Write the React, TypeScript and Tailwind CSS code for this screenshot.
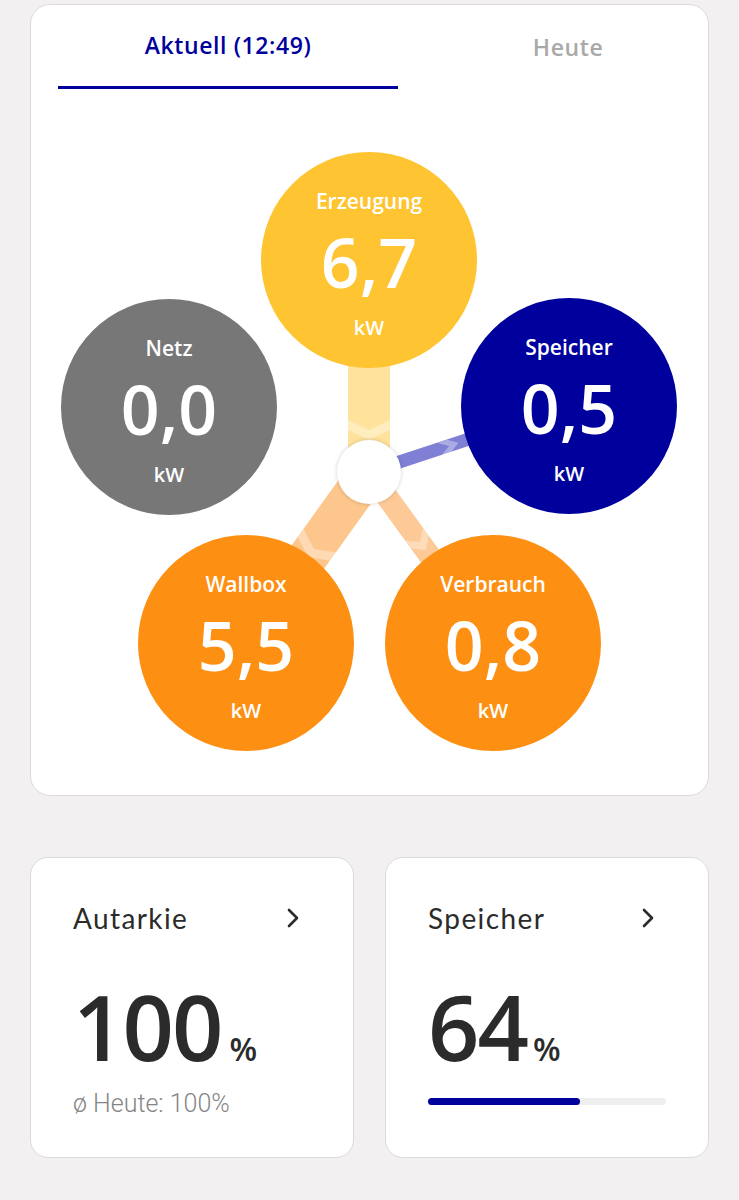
import React from 'react';

// flow-diagram node, positions are in the diagram box's own coordinates
type Node = {
  label: string;
  value: string;
  pos: string;
  color: string;
};

const nodes: Node[] = [
  { label: 'Erzeugung', value: '6,7', pos: 'left-[230px] top-[63px]', color: 'bg-[#fec431]' },
  { label: 'Netz', value: '0,0', pos: 'left-[30px] top-[210px]', color: 'bg-[#777777]' },
  { label: 'Speicher', value: '0,5', pos: 'left-[430px] top-[209px]', color: 'bg-[#00009c]' },
  { label: 'Wallbox', value: '5,5', pos: 'left-[107px] top-[446px]', color: 'bg-[#fd8f13]' },
  { label: 'Verbrauch', value: '0,8', pos: 'left-[354px] top-[446px]', color: 'bg-[#fd8f13]' },
];

const CX = 338;
const CY = 383;

function Chevron({ x, y, angle, h }: { x: number; y: number; angle: number; h: number }) {
  return (
    <polygon
      points={`-10,${-h} 0,${-h} 10,0 0,${h} -10,${h} 0,0`}
      transform={`translate(${x} ${y}) rotate(${angle})`}
      fill="#ffffff"
      fillOpacity={0.35}
    />
  );
}

function FlowLines() {
  return (
    <svg className="absolute left-0 top-0" width={677} height={703} viewBox="0 0 677 703">
      {/* Erzeugung -> center */}
      <line x1={CX} y1={260} x2={CX} y2={CY} stroke="#ffe39c" strokeWidth={42} />
      <Chevron x={CX} y={341} angle={90} h={21} />
      {/* center -> Speicher */}
      <line x1={CX} y1={CY} x2={538} y2={317} stroke="#7f7fd5" strokeWidth={13} />
      <Chevron x={418} y={357} angle={-18.3} h={6.5} />
      {/* center -> Wallbox */}
      <line x1={CX} y1={CY} x2={215} y2={554} stroke="#fdc68c" strokeWidth={40} />
      <Chevron x={283} y={460} angle={125.7} h={20} />
      {/* center -> Verbrauch */}
      <line x1={CX} y1={CY} x2={462} y2={554} stroke="#fdca97" strokeWidth={22} />
      <Chevron x={389} y={453} angle={54} h={11} />
    </svg>
  );
}

function Bubble({ node }: { node: Node }) {
  return (
    <div
      className={`absolute ${node.pos} ${node.color} w-[216px] h-[216px] rounded-full flex flex-col items-center text-white font-['Open_Sans',sans-serif]`}
    >
      <span className="mt-[38px] text-[21px] leading-[22px] font-semibold">{node.label}</span>
      <span className="mt-[16px] text-[68px] leading-[68px] font-semibold">{node.value}</span>
      <span className="mt-[21px] text-[20px] leading-[22px] font-semibold">kW</span>
    </div>
  );
}

function Chevr() {
  return (
    <svg width="12" height="20" viewBox="0 0 12 20" fill="none">
      <path d="M2 2l8 8-8 8" stroke="#2b2b2b" strokeWidth="2.6" strokeLinecap="round" strokeLinejoin="round" />
    </svg>
  );
}

export default function App() {
  return (
    <div className="h-[1200px] bg-[#f2f0f0] px-[30px] pt-[4px] font-['Lato',sans-serif] overflow-hidden">
      {/* live power flow */}
      <div className="h-[792px] bg-white rounded-[20px] border border-[#dcdada] overflow-hidden">
        <div className="flex pl-[27px] whitespace-nowrap font-['Open_Sans',sans-serif]">
          <div className="w-[340px] shrink-0 h-[84px] flex items-center justify-center border-b-[3px] border-[#00009c] text-[23px] font-semibold tracking-[0.6px] text-[#00009c]">
            Aktuell (12:49)
          </div>
          <div className="w-[340px] shrink-0 h-[84px] flex items-center justify-center text-[23px] font-semibold tracking-[0.6px] text-[#a9a9a9]">
            Heute
          </div>
        </div>

        <div className="relative h-[703px]">
          <FlowLines />
          {nodes.map(n => (
            <Bubble key={n.label} node={n} />
          ))}
          <div className="absolute left-[306px] top-[351px] w-[64px] h-[64px] rounded-full bg-white shadow-[0_0_4px_rgba(0,0,0,0.18)]" />
        </div>
      </div>

      <div className="mt-[61px] grid grid-cols-2 gap-[31px]">
        <div className="h-[301px] bg-white rounded-[18px] border border-[#dcdada] px-[42px] pt-[42px]">
          <div className="flex items-center justify-between pr-[12px]">
            <span className="text-[28px] leading-[36px] text-[#2b2b2b] tracking-[1.4px]">Autarkie</span>
            <Chevr />
          </div>
          <div className="mt-[50px] flex items-baseline text-[#2b2b2b] font-['Open_Sans',sans-serif]">
            <span className="text-[90px] leading-[80px] font-semibold tracking-[-2px]">100</span>
            <span className="ml-[8px] text-[32px] leading-[32px] font-semibold">%</span>
          </div>
          <div className="mt-[19px] font-['Roboto',sans-serif] font-light text-[25px] text-[#858585]">ø Heute: 100%</div>
        </div>

        <div className="h-[301px] bg-white rounded-[18px] border border-[#dcdada] px-[42px] pt-[42px]">
          <div className="flex items-center justify-between pr-[12px]">
            <span className="text-[28px] leading-[36px] text-[#2b2b2b] tracking-[1.4px]">Speicher</span>
            <Chevr />
          </div>
          <div className="mt-[50px] flex items-baseline text-[#2b2b2b] font-['Open_Sans',sans-serif]">
            <span className="text-[90px] leading-[80px] font-semibold tracking-[-2px]">64</span>
            <span className="ml-[6px] text-[32px] leading-[32px] font-semibold">%</span>
          </div>
          <div className="mt-[32px] h-[7px] rounded-full bg-[#efefef]">
            <div className="h-[7px] w-[64%] rounded-full bg-[#00009c]" />
          </div>
        </div>
      </div>
    </div>
  );
}
